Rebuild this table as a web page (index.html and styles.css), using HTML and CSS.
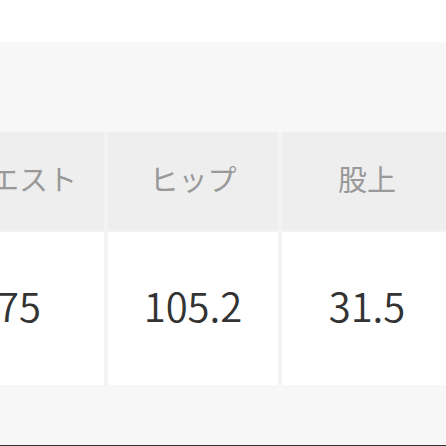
FILE: index.html
```html
<!DOCTYPE html>
<html lang="ja">
<head>
<meta charset="utf-8">
<link rel="stylesheet" href="styles.css">
</head>
<body>
<div class="top"></div>
<section class="panel">
  <div class="table">
    <div class="cell head">ウエスト</div>
    <div class="cell head">ヒップ</div>
    <div class="cell head">股上</div>
    <div class="cell data">75</div>
    <div class="cell data">105.2</div>
    <div class="cell data">31.5</div>
  </div>
</section>
<div class="rule"></div>
</body>
</html>
```
FILE: styles.css
```css
html, body {
  margin: 0;
  padding: 0;
  background: #ffffff;
  overflow: hidden;
}
body {
  width: 446px;
  height: 446px;
  font-family: "Noto Sans CJK JP", "Noto Sans", sans-serif;
}
.top {
  height: 42px;
  background: #ffffff;
}
.panel {
  height: 403px;
  background: #f7f7f7;
  padding-top: 90px;
  box-sizing: border-box;
  overflow: hidden;
}
.table {
  display: grid;
  grid-template-columns: 170px 170px 170px;
  grid-template-rows: 98px 153px;
  column-gap: 4px;
  row-gap: 2px;
  margin-left: -66px;
  background: #f3f3f3;
  width: 518px;
}
.cell {
  display: flex;
  align-items: center;
  justify-content: center;
  box-sizing: border-box;
}
.head {
  background: #eeeeee;
  color: #999999;
  font-size: 29px;
  padding-bottom: 7px;
}
.data {
  background: #ffffff;
  color: #333333;
  font-size: 40px;
  font-weight: 350;
  padding-bottom: 8px;
}
.rule {
  height: 1px;
  background: #333333;
}
```
